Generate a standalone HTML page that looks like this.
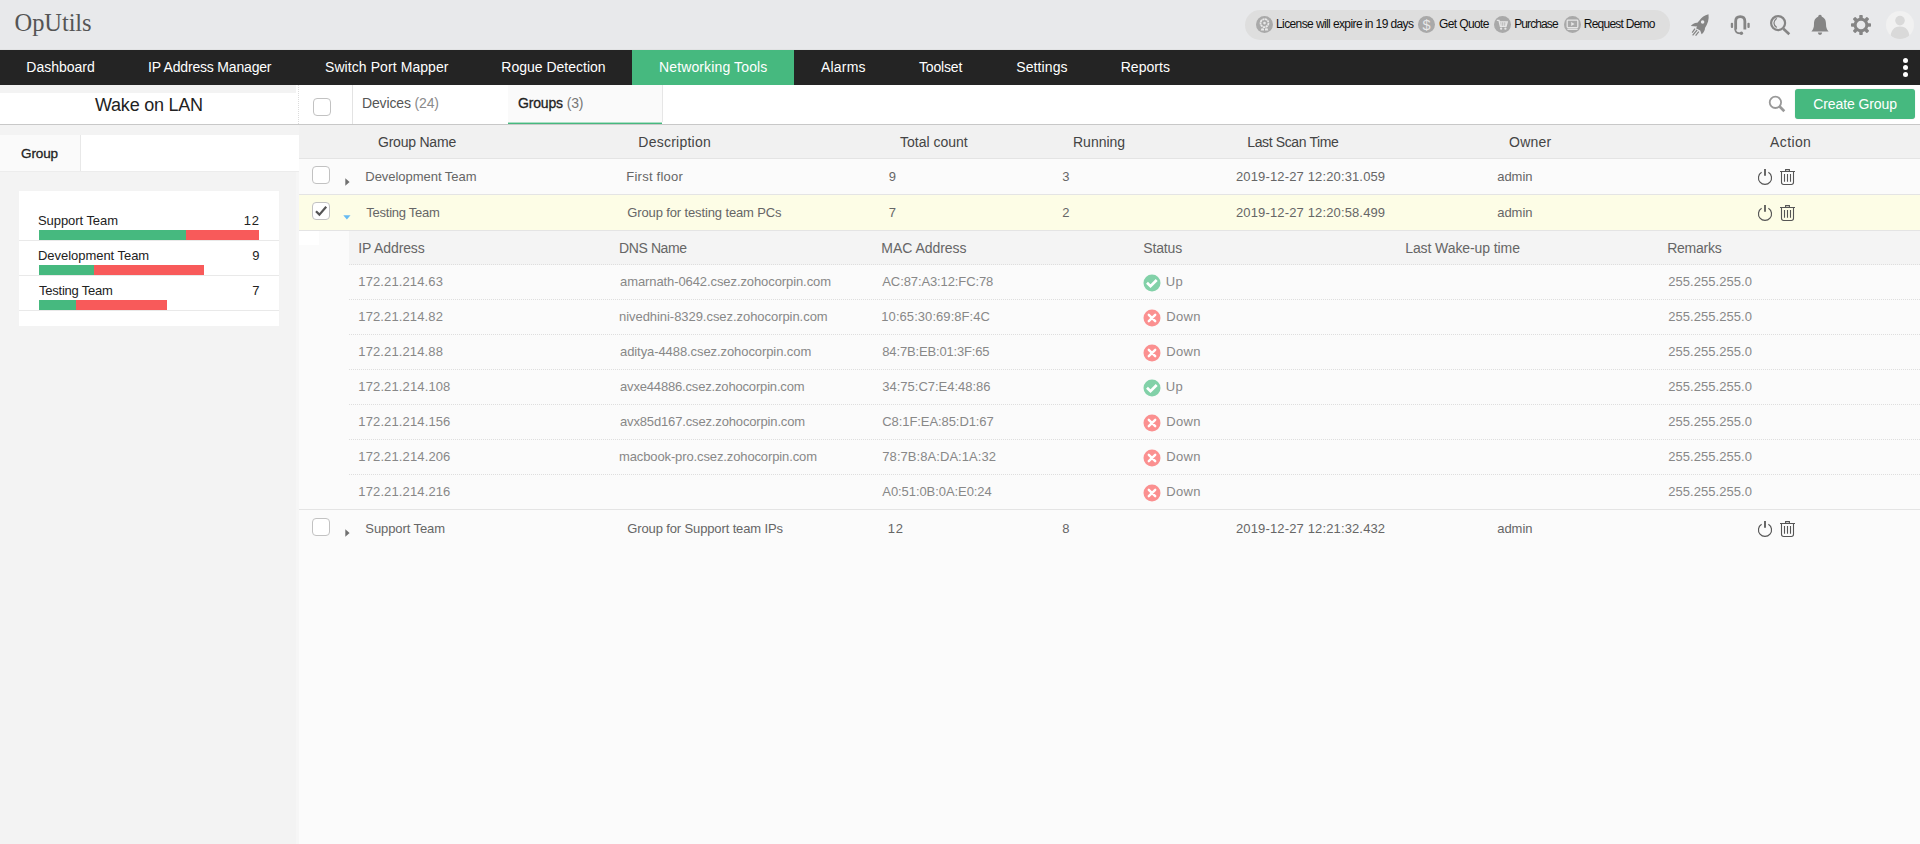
<!DOCTYPE html>
<html><head><meta charset="utf-8"><title>OpUtils - Wake on LAN</title>
<style>
html,body{margin:0;padding:0}
body{width:1920px;height:844px;position:relative;overflow:hidden;background:#fbfbfb;font-family:"Liberation Sans",sans-serif}
.b{position:absolute;box-sizing:content-box}
.t{position:absolute;white-space:pre;font-family:"Liberation Sans",sans-serif}
.t .sb{-webkit-text-stroke:0.3px currentColor}
</style></head><body>
<div class="b" style="left:0px;top:0px;width:1920px;height:50px;background:#e8e9eb;"></div>
<div class="b" style="left:0px;top:49px;width:1920px;height:1px;background:#e1e2e3;"></div>
<div class="b" style="left:0px;top:50px;width:1920px;height:35px;background:#242424;"></div>
<div class="b" style="left:632px;top:50px;width:162px;height:35px;background:#46b97f;"></div>
<div class="b" style="left:0px;top:85px;width:299px;height:759px;background:#f3f3f3;"></div>
<div class="b" style="left:296px;top:171px;width:3px;height:673px;background:#f6f6f6;"></div>
<div class="b" style="left:0px;top:93px;width:296px;height:31px;background:#fff;"></div>
<div class="b" style="left:296px;top:85px;width:2px;height:39px;background:#fff;"></div>
<div class="b" style="left:0px;top:124px;width:298px;height:1px;background:#c8c8c8;"></div>
<div class="b" style="left:0px;top:135px;width:299px;height:36px;background:#fff;border-bottom:1px solid #ececec"></div>
<div class="b" style="left:0px;top:135px;width:80px;height:36px;background:#fafafa;border-right:1px solid #e8e8e8"></div>
<div class="b" style="left:19px;top:191px;width:260px;height:135px;background:#fff;"></div>
<div class="b" style="left:19px;top:240px;width:260px;height:1px;background:#e9e9e9;"></div>
<div class="b" style="left:19px;top:275px;width:260px;height:1px;background:#e9e9e9;"></div>
<div class="b" style="left:19px;top:310px;width:260px;height:1px;background:#e9e9e9;"></div>
<div class="b" style="left:39px;top:230px;width:147px;height:10px;background:#46b97f;"></div>
<div class="b" style="left:186px;top:230px;width:73px;height:10px;background:#f85a5a;"></div>
<div class="b" style="left:39px;top:265px;width:55px;height:10px;background:#46b97f;"></div>
<div class="b" style="left:94px;top:265px;width:110px;height:10px;background:#f85a5a;"></div>
<div class="b" style="left:39px;top:300px;width:37px;height:10px;background:#46b97f;"></div>
<div class="b" style="left:76px;top:300px;width:91px;height:10px;background:#f85a5a;"></div>
<div class="b" style="left:299px;top:85px;width:1621px;height:759px;background:#fbfbfb;"></div>
<div class="b" style="left:298px;top:85px;width:1622px;height:39px;background:#fff;"></div>
<div class="b" style="left:298px;top:85px;width:1px;height:39px;background:transparent;border-left:1px dotted #dcdcdc"></div>
<div class="b" style="left:352px;top:85px;width:1px;height:39px;background:#e3e3e3;"></div>
<div class="b" style="left:508px;top:85px;width:154px;height:37px;background:#fafafa;border-right:1px solid #e6e6e6"></div>
<div class="b" style="left:508px;top:122px;width:154px;height:1px;background:rgba(70,185,127,.45);"></div>
<div class="b" style="left:508px;top:123px;width:154px;height:1px;background:#46b97f;"></div>
<div class="b" style="left:298px;top:124px;width:1622px;height:1px;background:#c8c8c8;"></div>
<div class="b" style="left:299px;top:125px;width:1621px;height:33px;background:#f1f1f1;border-bottom:1px solid #e4e4e4"></div>
<div class="b" style="left:299px;top:159px;width:1621px;height:35px;background:#fbfbfb;border-bottom:1px solid #e4e4e4"></div>
<div class="b" style="left:299px;top:195px;width:1621px;height:35px;background:#fdfde6;border-bottom:1px solid #e4e4e4"></div>
<div class="b" style="left:299px;top:231px;width:20px;height:14px;background:#fff;"></div>
<div class="b" style="left:349px;top:231px;width:1571px;height:33px;background:#f4f4f4;border-bottom:1px dotted #dedede"></div>
<div class="b" style="left:349px;top:299px;width:1571px;height:1px;background:transparent;border-top:1px dotted #dedede;height:0"></div>
<div class="b" style="left:349px;top:334px;width:1571px;height:1px;background:transparent;border-top:1px dotted #dedede;height:0"></div>
<div class="b" style="left:349px;top:369px;width:1571px;height:1px;background:transparent;border-top:1px dotted #dedede;height:0"></div>
<div class="b" style="left:349px;top:404px;width:1571px;height:1px;background:transparent;border-top:1px dotted #dedede;height:0"></div>
<div class="b" style="left:349px;top:439px;width:1571px;height:1px;background:transparent;border-top:1px dotted #dedede;height:0"></div>
<div class="b" style="left:349px;top:474px;width:1571px;height:1px;background:transparent;border-top:1px dotted #dedede;height:0"></div>
<div class="b" style="left:299px;top:509px;width:1621px;height:1px;background:#e4e4e4;"></div>
<div class="b" style="left:1795px;top:89px;width:120px;height:30px;background:#46b97f;border-radius:3px;box-shadow:0 0 1px rgba(0,0,0,.25)"></div>
<div class="b" style="left:1245px;top:10px;width:425px;height:30px;background:#dedede;border-radius:15px"></div>
<div class="b" style="left:313px;top:98px;width:16px;height:16px;background:#fff;border:1px solid #c2c2c2;border-radius:4px"></div>
<div class="b" style="left:312px;top:166px;width:16px;height:16px;background:#fff;border:1px solid #c2c2c2;border-radius:4px"></div>
<div class="b" style="left:312px;top:202px;width:16px;height:16px;background:#fff;border:1px solid #c2c2c2;border-radius:4px"></div><svg class="b" style="left:312px;top:202px" width="18" height="18" viewBox="0 0 18 18"><path d="M4 9.2 L7.4 12.6 L14.2 4.8" fill="none" stroke="#555" stroke-width="2.2"/></svg>
<div class="b" style="left:312px;top:518px;width:16px;height:16px;background:#fff;border:1px solid #c2c2c2;border-radius:4px"></div>
<svg class="b" style="left:345px;top:177.5px" width="5" height="8" viewBox="0 0 5 8"><path d="M0.3 0.3 L4.6 4 L0.3 7.7Z" fill="#707070"/></svg>
<svg class="b" style="left:345px;top:529px" width="5" height="8" viewBox="0 0 5 8"><path d="M0.3 0.3 L4.6 4 L0.3 7.7Z" fill="#707070"/></svg>
<svg class="b" style="left:342.5px;top:215px" width="8" height="5" viewBox="0 0 8 5"><path d="M0.3 0.3 L7.5 0.3 L3.9 4.4Z" fill="#66baf2"/></svg>
<div class="b" style="left:1903px;top:57.9px;width:5.2px;height:5.2px;border-radius:50%;background:#fff"></div>
<div class="b" style="left:1903px;top:64.7px;width:5.2px;height:5.2px;border-radius:50%;background:#fff"></div>
<div class="b" style="left:1903px;top:71.60000000000001px;width:5.2px;height:5.2px;border-radius:50%;background:#fff"></div>
<svg class="b" style="left:1143.2px;top:274px" width="18" height="18" viewBox="0 0 18 18"><circle cx="9" cy="9" r="8.5" fill="#82d1a8"/><path d="M4.0 8.8 L7.5 12.2 L13.7 6.0" fill="none" stroke="#fff" stroke-width="2.7"/></svg>
<svg class="b" style="left:1143.2px;top:309px" width="18" height="18" viewBox="0 0 18 18"><circle cx="9" cy="9" r="8.5" fill="#fb9090"/><path d="M5.8 5.8 L12.2 12.2 M12.2 5.8 L5.8 12.2" fill="none" stroke="#fff" stroke-width="2.4" stroke-linecap="round"/></svg>
<svg class="b" style="left:1143.2px;top:344px" width="18" height="18" viewBox="0 0 18 18"><circle cx="9" cy="9" r="8.5" fill="#fb9090"/><path d="M5.8 5.8 L12.2 12.2 M12.2 5.8 L5.8 12.2" fill="none" stroke="#fff" stroke-width="2.4" stroke-linecap="round"/></svg>
<svg class="b" style="left:1143.2px;top:379px" width="18" height="18" viewBox="0 0 18 18"><circle cx="9" cy="9" r="8.5" fill="#82d1a8"/><path d="M4.0 8.8 L7.5 12.2 L13.7 6.0" fill="none" stroke="#fff" stroke-width="2.7"/></svg>
<svg class="b" style="left:1143.2px;top:414px" width="18" height="18" viewBox="0 0 18 18"><circle cx="9" cy="9" r="8.5" fill="#fb9090"/><path d="M5.8 5.8 L12.2 12.2 M12.2 5.8 L5.8 12.2" fill="none" stroke="#fff" stroke-width="2.4" stroke-linecap="round"/></svg>
<svg class="b" style="left:1143.2px;top:449px" width="18" height="18" viewBox="0 0 18 18"><circle cx="9" cy="9" r="8.5" fill="#fb9090"/><path d="M5.8 5.8 L12.2 12.2 M12.2 5.8 L5.8 12.2" fill="none" stroke="#fff" stroke-width="2.4" stroke-linecap="round"/></svg>
<svg class="b" style="left:1143.2px;top:484px" width="18" height="18" viewBox="0 0 18 18"><circle cx="9" cy="9" r="8.5" fill="#fb9090"/><path d="M5.8 5.8 L12.2 12.2 M12.2 5.8 L5.8 12.2" fill="none" stroke="#fff" stroke-width="2.4" stroke-linecap="round"/></svg>
<svg class="b" style="left:1757px;top:168px" width="16" height="18" viewBox="0 0 16 18"><path d="M4.6 4.3 A6.55 6.55 0 1 0 11.4 4.3" fill="none" stroke="#555" stroke-width="1.15"/><path d="M8 1.1 V7.8" stroke="#444" stroke-width="1.6"/></svg>
<svg class="b" style="left:1779px;top:168px" width="17" height="18" viewBox="0 0 17 18"><path d="M1 3.5 H16 M6.6 3.5 V1.6 H10.4 V3.5 M2.5 3.5 V14.3 Q2.5 16.5 4.7 16.5 H12.3 Q14.5 16.5 14.5 14.3 V3.5 M5.5 6 V13.7 M8.5 6 V13.7 M11.5 6 V13.7" fill="none" stroke="#555" stroke-width="1.1"/></svg>
<svg class="b" style="left:1757px;top:204px" width="16" height="18" viewBox="0 0 16 18"><path d="M4.6 4.3 A6.55 6.55 0 1 0 11.4 4.3" fill="none" stroke="#555" stroke-width="1.15"/><path d="M8 1.1 V7.8" stroke="#444" stroke-width="1.6"/></svg>
<svg class="b" style="left:1779px;top:204px" width="17" height="18" viewBox="0 0 17 18"><path d="M1 3.5 H16 M6.6 3.5 V1.6 H10.4 V3.5 M2.5 3.5 V14.3 Q2.5 16.5 4.7 16.5 H12.3 Q14.5 16.5 14.5 14.3 V3.5 M5.5 6 V13.7 M8.5 6 V13.7 M11.5 6 V13.7" fill="none" stroke="#555" stroke-width="1.1"/></svg>
<svg class="b" style="left:1757px;top:520px" width="16" height="18" viewBox="0 0 16 18"><path d="M4.6 4.3 A6.55 6.55 0 1 0 11.4 4.3" fill="none" stroke="#555" stroke-width="1.15"/><path d="M8 1.1 V7.8" stroke="#444" stroke-width="1.6"/></svg>
<svg class="b" style="left:1779px;top:520px" width="17" height="18" viewBox="0 0 17 18"><path d="M1 3.5 H16 M6.6 3.5 V1.6 H10.4 V3.5 M2.5 3.5 V14.3 Q2.5 16.5 4.7 16.5 H12.3 Q14.5 16.5 14.5 14.3 V3.5 M5.5 6 V13.7 M8.5 6 V13.7 M11.5 6 V13.7" fill="none" stroke="#555" stroke-width="1.1"/></svg>
<svg class="b" style="left:1768px;top:95px" width="18" height="18" viewBox="0 0 18 18"><circle cx="7.4" cy="7.3" r="5.7" fill="none" stroke="#999" stroke-width="1.8"/><path d="M11.4 11.3 L16.3 16.2" stroke="#999" stroke-width="2.7"/></svg>
<svg class="b" style="left:1256px;top:16px" width="17" height="17" viewBox="0 0 17 17"><circle cx="8.5" cy="8.5" r="8.5" fill="#a9a9a9"/><circle cx="8.5" cy="7.1" r="4" fill="none" stroke="#e8e8e8" stroke-width="1.7" stroke-dasharray="2.2 0.5"/><circle cx="8.5" cy="7.1" r="1.3" fill="#e8e8e8"/><path d="M5.6 12.2 L4.7 14.6 H8 V12.4 Z M11.4 12.2 L12.3 14.6 H9 V12.4 Z" fill="#e8e8e8"/></svg>
<svg class="b" style="left:1418px;top:16px" width="17" height="17" viewBox="0 0 17 17"><circle cx="8.5" cy="8.5" r="8.5" fill="#a9a9a9"/><text x="8.5" y="13.6" font-family="Liberation Sans, sans-serif" font-size="14.5" text-anchor="middle" fill="#e8e8e8">$</text></svg>
<svg class="b" style="left:1494px;top:16px" width="17" height="17" viewBox="0 0 17 17"><circle cx="8.5" cy="8.5" r="8.5" fill="#a9a9a9"/><path d="M2.8 4.4 H5 L6.4 10.2 H12 L13.2 5.9 H5.5" fill="none" stroke="#e6e6e6" stroke-width="1.4"/><path d="M7.6 6 V10 M9.6 6 V10 M11.4 6 V10 M6 8 H12.6" stroke="#e6e6e6" stroke-width="0.7"/><circle cx="7.1" cy="12.7" r="1.15" fill="#e6e6e6"/><circle cx="11.4" cy="12.7" r="1.15" fill="#e6e6e6"/></svg>
<svg class="b" style="left:1564px;top:16px" width="17" height="17" viewBox="0 0 17 17"><circle cx="8.5" cy="8.5" r="8.5" fill="#a9a9a9"/><rect x="3.2" y="4.2" width="10.6" height="7.4" rx="0.8" fill="none" stroke="#e6e6e6" stroke-width="1.3"/><path d="M7.2 5.9 L10.6 7.9 L7.2 9.9Z" fill="#e6e6e6"/><path d="M3.4 13.3 H13.6" stroke="#e6e6e6" stroke-width="1.3"/></svg>
<svg class="b" style="left:1689px;top:13px" width="22" height="24" viewBox="0 0 22 24"><path d="M19.5 1.3 C15.4 2.3 12.6 4.4 10.6 7.2 L8.4 9.8 C5.6 9.6 3.4 11 1.8 13 L8.2 13.5 L7 15.2 L11.2 17.6 L12.6 21.2 C14.8 19.4 16 17.2 16 14.9 C18.8 11 20.2 6.4 19.5 1.3 Z" fill="#858585"/><circle cx="13.6" cy="9" r="1.75" fill="#e8e9eb"/><path d="M6 15.6 L3.2 19.6 M8.1 17 L3.6 22.3 M9.8 18.6 L6.6 22.7" stroke="#858585" stroke-width="1.25"/></svg>
<svg class="b" style="left:1730px;top:14px" width="21" height="22" viewBox="0 0 21 22"><path d="M5.65 15.4 V7.2 Q5.65 2.6 10.25 2.6 Q14.85 2.6 14.85 7.2 V15.4" fill="none" stroke="#858585" stroke-width="2.8"/><path d="M5.2 15 Q5.2 19.4 10.6 19.4" fill="none" stroke="#858585" stroke-width="1.7"/><circle cx="11.4" cy="19.3" r="1.7" fill="#858585"/><rect x="0.8" y="8.7" width="2.3" height="5.2" rx="1" fill="#858585"/><rect x="17.4" y="8.7" width="2.3" height="5.2" rx="1" fill="#858585"/></svg>
<svg class="b" style="left:1769px;top:14px" width="23" height="23" viewBox="0 0 23 23"><circle cx="9.1" cy="9.1" r="7" fill="none" stroke="#858585" stroke-width="2.2"/><path d="M14.4 14.7 L20.3 20.3" stroke="#858585" stroke-width="2.6"/><path d="M7.7 4.3 Q2.2 9.1 7.7 13.6" fill="none" stroke="#858585" stroke-width="1.3"/></svg>
<svg class="b" style="left:1811px;top:14px" width="18" height="22" viewBox="0 0 18 22"><path d="M9 0.8 C10.4 0.8 10.8 1.8 10.8 2.8 C14 3.8 15 7 15 10 C15 13.6 15.8 15.6 17.6 17.4 H0.4 C2.2 15.6 3 13.6 3 10 C3 7 4 3.8 7.2 2.8 C7.2 1.8 7.6 0.8 9 0.8 Z" fill="#858585"/><path d="M6.8 18.6 H11.2 Q11 21 9 21 Q7 21 6.8 18.6Z" fill="#858585"/></svg>
<svg class="b" style="left:1851px;top:15px" width="20" height="20" viewBox="-10 -10 20 20"><circle r="5.85" fill="none" stroke="#858585" stroke-width="3"/><rect x="-1.75" y="-10" width="3.5" height="4" rx="0.8" transform="rotate(0)" fill="#858585"/><rect x="-1.75" y="-10" width="3.5" height="4" rx="0.8" transform="rotate(45)" fill="#858585"/><rect x="-1.75" y="-10" width="3.5" height="4" rx="0.8" transform="rotate(90)" fill="#858585"/><rect x="-1.75" y="-10" width="3.5" height="4" rx="0.8" transform="rotate(135)" fill="#858585"/><rect x="-1.75" y="-10" width="3.5" height="4" rx="0.8" transform="rotate(180)" fill="#858585"/><rect x="-1.75" y="-10" width="3.5" height="4" rx="0.8" transform="rotate(225)" fill="#858585"/><rect x="-1.75" y="-10" width="3.5" height="4" rx="0.8" transform="rotate(270)" fill="#858585"/><rect x="-1.75" y="-10" width="3.5" height="4" rx="0.8" transform="rotate(315)" fill="#858585"/></svg>
<div class="b" style="left:1886px;top:11px;width:28px;height:28px;border-radius:50%;overflow:hidden;background:#f1f1f1"><svg width="28" height="28" viewBox="0 0 28 28" style="display:block"><g fill="#d9d9d9"><circle cx="14" cy="9.6" r="4.8"/><path d="M4.4 28 Q4.4 15.4 14 15.4 Q23.6 15.4 23.6 28Z"/></g></svg></div>
<div class="t" style="left:14.6px;top:11px;font-size:24.5px;line-height:24.5px;color:#555;letter-spacing:-0.1px;font-family:'Liberation Serif',serif;">OpUtils</div>
<div class="t" style="left:1276px;top:18px;font-size:12px;line-height:12px;color:#111;letter-spacing:-0.6px;">License will expire in 19 days</div>
<div class="t" style="left:1439px;top:18px;font-size:12px;line-height:12px;color:#111;letter-spacing:-0.62px;">Get Quote</div>
<div class="t" style="left:1514.2px;top:18px;font-size:12px;line-height:12px;color:#111;letter-spacing:-0.89px;">Purchase</div>
<div class="t" style="left:1583.8px;top:18px;font-size:12px;line-height:12px;color:#111;letter-spacing:-0.76px;">Request Demo</div>
<div class="t" style="left:26.3px;top:60px;font-size:14px;line-height:14px;color:#fff;letter-spacing:0.0px;">Dashboard</div>
<div class="t" style="left:148px;top:60px;font-size:14px;line-height:14px;color:#fff;letter-spacing:-0.18px;">IP Address Manager</div>
<div class="t" style="left:325px;top:60px;font-size:14px;line-height:14px;color:#fff;letter-spacing:0.08px;">Switch Port Mapper</div>
<div class="t" style="left:501.3px;top:60px;font-size:14px;line-height:14px;color:#fff;letter-spacing:-0.0px;">Rogue Detection</div>
<div class="t" style="left:659px;top:60px;font-size:14px;line-height:14px;color:#fff;letter-spacing:0.13px;">Networking Tools</div>
<div class="t" style="left:821px;top:60px;font-size:14px;line-height:14px;color:#fff;letter-spacing:0.2px;">Alarms</div>
<div class="t" style="left:919px;top:60px;font-size:14px;line-height:14px;color:#fff;letter-spacing:-0.17px;">Toolset</div>
<div class="t" style="left:1016.3px;top:60px;font-size:14px;line-height:14px;color:#fff;letter-spacing:0.1px;">Settings</div>
<div class="t" style="left:1120.7px;top:60px;font-size:14px;line-height:14px;color:#fff;letter-spacing:0.05px;">Reports</div>
<div class="t" style="left:95px;top:96px;font-size:18px;line-height:18px;color:#222;letter-spacing:-0.23px;">Wake on LAN</div>
<div class="t" style="left:21px;top:147px;font-size:13.5px;line-height:13.5px;color:#222;letter-spacing:-0.12px;-webkit-text-stroke:0.3px currentColor;">Group</div>
<div class="t" style="left:38px;top:214px;font-size:13px;line-height:13px;color:#222;letter-spacing:-0.06px;">Support Team</div>
<div class="t" style="left:243.8px;top:214px;font-size:13px;line-height:13px;color:#222;letter-spacing:0.8px;">12</div>
<div class="t" style="left:38px;top:249px;font-size:13px;line-height:13px;color:#222;letter-spacing:-0.04px;">Development Team</div>
<div class="t" style="left:252.3px;top:249px;font-size:13px;line-height:13px;color:#222;letter-spacing:0px;">9</div>
<div class="t" style="left:39px;top:284px;font-size:13px;line-height:13px;color:#222;letter-spacing:-0.23px;">Testing Team</div>
<div class="t" style="left:252.3px;top:284px;font-size:13px;line-height:13px;color:#222;letter-spacing:0px;">7</div>
<div class="t" style="left:362px;top:96px;font-size:14px;line-height:14px;color:#555;letter-spacing:-0.15px;">Devices <span style="color:#8a8a8a">(24)</span></div>
<div class="t" style="left:518px;top:96px;font-size:14px;line-height:14px;color:#222;letter-spacing:-0.16px;"><span class="sb">Groups</span> <span style="color:#777">(3)</span></div>
<div class="t" style="left:1813.3px;top:97px;font-size:14px;line-height:14px;color:#fff;letter-spacing:-0.1px;">Create Group</div>
<div class="t" style="left:378px;top:135px;font-size:14px;line-height:14px;color:#444;letter-spacing:-0.22px;">Group Name</div>
<div class="t" style="left:638.3px;top:135px;font-size:14px;line-height:14px;color:#444;letter-spacing:0.24px;">Description</div>
<div class="t" style="left:900px;top:135px;font-size:14px;line-height:14px;color:#444;letter-spacing:0.0px;">Total count</div>
<div class="t" style="left:1073px;top:135px;font-size:14px;line-height:14px;color:#444;letter-spacing:0.0px;">Running</div>
<div class="t" style="left:1247.3px;top:135px;font-size:14px;line-height:14px;color:#444;letter-spacing:-0.38px;">Last Scan Time</div>
<div class="t" style="left:1509px;top:135px;font-size:14px;line-height:14px;color:#444;letter-spacing:0.25px;">Owner</div>
<div class="t" style="left:1770px;top:135px;font-size:14px;line-height:14px;color:#444;letter-spacing:0.4px;">Action</div>
<div class="t" style="left:365.3px;top:170px;font-size:13px;line-height:13px;color:#666;letter-spacing:-0.04px;">Development Team</div>
<div class="t" style="left:626.3px;top:170px;font-size:13px;line-height:13px;color:#666;letter-spacing:0.24px;">First floor</div>
<div class="t" style="left:888.7px;top:170px;font-size:13px;line-height:13px;color:#666;letter-spacing:0px;">9</div>
<div class="t" style="left:1062.3px;top:170px;font-size:13px;line-height:13px;color:#666;letter-spacing:0px;">3</div>
<div class="t" style="left:1236px;top:170px;font-size:13px;line-height:13px;color:#666;letter-spacing:0.14px;">2019-12-27 12:20:31.059</div>
<div class="t" style="left:1497.3px;top:170px;font-size:13px;line-height:13px;color:#666;letter-spacing:-0.07px;">admin</div>
<div class="t" style="left:366.3px;top:206px;font-size:13px;line-height:13px;color:#666;letter-spacing:-0.25px;">Testing Team</div>
<div class="t" style="left:627.3px;top:206px;font-size:13px;line-height:13px;color:#666;letter-spacing:-0.13px;">Group for testing team PCs</div>
<div class="t" style="left:888.7px;top:206px;font-size:13px;line-height:13px;color:#666;letter-spacing:0px;">7</div>
<div class="t" style="left:1062.3px;top:206px;font-size:13px;line-height:13px;color:#666;letter-spacing:0px;">2</div>
<div class="t" style="left:1236px;top:206px;font-size:13px;line-height:13px;color:#666;letter-spacing:0.14px;">2019-12-27 12:20:58.499</div>
<div class="t" style="left:1497.3px;top:206px;font-size:13px;line-height:13px;color:#666;letter-spacing:-0.07px;">admin</div>
<div class="t" style="left:365.3px;top:522px;font-size:13px;line-height:13px;color:#666;letter-spacing:-0.09px;">Support Team</div>
<div class="t" style="left:627.3px;top:522px;font-size:13px;line-height:13px;color:#666;letter-spacing:-0.13px;">Group for Support team IPs</div>
<div class="t" style="left:887.7px;top:522px;font-size:13px;line-height:13px;color:#666;letter-spacing:0.8px;">12</div>
<div class="t" style="left:1062.3px;top:522px;font-size:13px;line-height:13px;color:#666;letter-spacing:0px;">8</div>
<div class="t" style="left:1236px;top:522px;font-size:13px;line-height:13px;color:#666;letter-spacing:0.14px;">2019-12-27 12:21:32.432</div>
<div class="t" style="left:1497.3px;top:522px;font-size:13px;line-height:13px;color:#666;letter-spacing:-0.07px;">admin</div>
<div class="t" style="left:358.3px;top:241px;font-size:14px;line-height:14px;color:#666;letter-spacing:-0.11px;">IP Address</div>
<div class="t" style="left:619px;top:241px;font-size:14px;line-height:14px;color:#666;letter-spacing:-0.39px;">DNS Name</div>
<div class="t" style="left:881.3px;top:241px;font-size:14px;line-height:14px;color:#666;letter-spacing:-0.03px;">MAC Address</div>
<div class="t" style="left:1143.2px;top:241px;font-size:14px;line-height:14px;color:#666;letter-spacing:-0.14px;">Status</div>
<div class="t" style="left:1405.2px;top:241px;font-size:14px;line-height:14px;color:#666;letter-spacing:-0.09px;">Last Wake-up time</div>
<div class="t" style="left:1667.2px;top:241px;font-size:14px;line-height:14px;color:#666;letter-spacing:-0.25px;">Remarks</div>
<div class="t" style="left:358.3px;top:275px;font-size:13px;line-height:13px;color:#888;letter-spacing:0.12px;">172.21.214.63</div>
<div class="t" style="left:620px;top:275px;font-size:13px;line-height:13px;color:#888;letter-spacing:-0.09px;">amarnath-0642.csez.zohocorpin.com</div>
<div class="t" style="left:882.3px;top:275px;font-size:13px;line-height:13px;color:#888;letter-spacing:-0.11px;">AC:87:A3:12:FC:78</div>
<div class="t" style="left:1165.7px;top:275px;font-size:13px;line-height:13px;color:#888;letter-spacing:0.3px;">Up</div>
<div class="t" style="left:1668.2px;top:275px;font-size:13px;line-height:13px;color:#888;letter-spacing:0.05px;">255.255.255.0</div>
<div class="t" style="left:358.3px;top:310px;font-size:13px;line-height:13px;color:#888;letter-spacing:0.12px;">172.21.214.82</div>
<div class="t" style="left:619px;top:310px;font-size:13px;line-height:13px;color:#888;letter-spacing:-0.05px;">nivedhini-8329.csez.zohocorpin.com</div>
<div class="t" style="left:881.3px;top:310px;font-size:13px;line-height:13px;color:#888;letter-spacing:0.06px;">10:65:30:69:8F:4C</div>
<div class="t" style="left:1166.2px;top:310px;font-size:13px;line-height:13px;color:#888;letter-spacing:0.37px;">Down</div>
<div class="t" style="left:1668.2px;top:310px;font-size:13px;line-height:13px;color:#888;letter-spacing:0.05px;">255.255.255.0</div>
<div class="t" style="left:358.3px;top:345px;font-size:13px;line-height:13px;color:#888;letter-spacing:0.12px;">172.21.214.88</div>
<div class="t" style="left:620px;top:345px;font-size:13px;line-height:13px;color:#888;letter-spacing:-0.08px;">aditya-4488.csez.zohocorpin.com</div>
<div class="t" style="left:882.3px;top:345px;font-size:13px;line-height:13px;color:#888;letter-spacing:-0.16px;">84:7B:EB:01:3F:65</div>
<div class="t" style="left:1166.2px;top:345px;font-size:13px;line-height:13px;color:#888;letter-spacing:0.37px;">Down</div>
<div class="t" style="left:1668.2px;top:345px;font-size:13px;line-height:13px;color:#888;letter-spacing:0.05px;">255.255.255.0</div>
<div class="t" style="left:358.3px;top:380px;font-size:13px;line-height:13px;color:#888;letter-spacing:0.13px;">172.21.214.108</div>
<div class="t" style="left:620px;top:380px;font-size:13px;line-height:13px;color:#888;letter-spacing:-0.17px;">avxe44886.csez.zohocorpin.com</div>
<div class="t" style="left:882.3px;top:380px;font-size:13px;line-height:13px;color:#888;letter-spacing:-0.01px;">34:75:C7:E4:48:86</div>
<div class="t" style="left:1165.7px;top:380px;font-size:13px;line-height:13px;color:#888;letter-spacing:0.3px;">Up</div>
<div class="t" style="left:1668.2px;top:380px;font-size:13px;line-height:13px;color:#888;letter-spacing:0.05px;">255.255.255.0</div>
<div class="t" style="left:358.3px;top:415px;font-size:13px;line-height:13px;color:#888;letter-spacing:0.13px;">172.21.214.156</div>
<div class="t" style="left:620px;top:415px;font-size:13px;line-height:13px;color:#888;letter-spacing:-0.15px;">avx85d167.csez.zohocorpin.com</div>
<div class="t" style="left:882.3px;top:415px;font-size:13px;line-height:13px;color:#888;letter-spacing:-0.08px;">C8:1F:EA:85:D1:67</div>
<div class="t" style="left:1166.2px;top:415px;font-size:13px;line-height:13px;color:#888;letter-spacing:0.37px;">Down</div>
<div class="t" style="left:1668.2px;top:415px;font-size:13px;line-height:13px;color:#888;letter-spacing:0.05px;">255.255.255.0</div>
<div class="t" style="left:358.3px;top:450px;font-size:13px;line-height:13px;color:#888;letter-spacing:0.13px;">172.21.214.206</div>
<div class="t" style="left:619px;top:450px;font-size:13px;line-height:13px;color:#888;letter-spacing:-0.12px;">macbook-pro.csez.zohocorpin.com</div>
<div class="t" style="left:882.3px;top:450px;font-size:13px;line-height:13px;color:#888;letter-spacing:0.06px;">78:7B:8A:DA:1A:32</div>
<div class="t" style="left:1166.2px;top:450px;font-size:13px;line-height:13px;color:#888;letter-spacing:0.37px;">Down</div>
<div class="t" style="left:1668.2px;top:450px;font-size:13px;line-height:13px;color:#888;letter-spacing:0.05px;">255.255.255.0</div>
<div class="t" style="left:358.3px;top:485px;font-size:13px;line-height:13px;color:#888;letter-spacing:0.13px;">172.21.214.216</div>
<div class="t" style="left:882.3px;top:485px;font-size:13px;line-height:13px;color:#888;letter-spacing:-0.07px;">A0:51:0B:0A:E0:24</div>
<div class="t" style="left:1166.2px;top:485px;font-size:13px;line-height:13px;color:#888;letter-spacing:0.37px;">Down</div>
<div class="t" style="left:1668.2px;top:485px;font-size:13px;line-height:13px;color:#888;letter-spacing:0.05px;">255.255.255.0</div>
</body></html>
